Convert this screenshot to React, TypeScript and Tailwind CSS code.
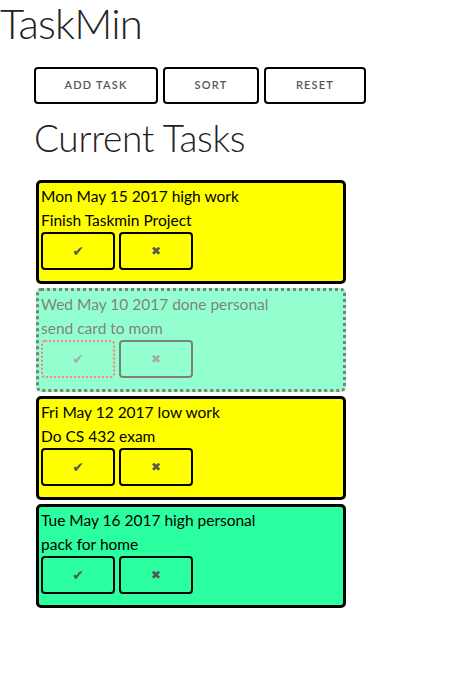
import React from "react";

type Task = { date: string; body: string; bg: string; done?: boolean };

const tasks: Task[] = [
  { date: "Mon May 15 2017 high work", body: "Finish Taskmin Project", bg: "bg-[#ffff00]" },
  { date: "Wed May 10 2017 done personal", body: "send card to mom", bg: "bg-[#2bff9f]", done: true },
  { date: "Fri May 12 2017 low work", body: "Do CS 432 exam", bg: "bg-[#ffff00]" },
  { date: "Tue May 16 2017 high personal", body: "pack for home", bg: "bg-[#2bff9f]" },
];

function Card({ t }: { t: Task }) {
  return (
    <div
      className={`${t.bg} ${t.done ? "opacity-50 border-dotted" : "border-solid"} border-[3px] border-black rounded-[5px] w-[310px] h-[104px] pl-[2px] pt-[1px] text-black text-[15.5px]`}
    >
      <div className="h-[24px] leading-[24px]">{t.date}</div>
      <div className="h-[24px] leading-[24px]">{t.body}</div>
      <div className="flex gap-[4px]">
        <button
          className={`w-[74px] h-[38px] rounded-[4px] border-2 ${t.done ? "border-dotted border-[#ff0000]" : "border-solid border-black"} flex items-center justify-center text-[14px] text-[#555]`}
          style={{ fontFamily: "'DejaVu Sans', sans-serif" }}
        >
          ✔
        </button>
        <button
          className="w-[74px] h-[38px] rounded-[4px] border-2 border-solid border-black flex items-center justify-center text-[12px] text-[#555]"
          style={{ fontFamily: "'DejaVu Sans', sans-serif" }}
        >
          ✖
        </button>
      </div>
    </div>
  );
}

export default function App() {
  return (
    <div className="bg-white min-h-[697px] text-[#222]" style={{ fontFamily: "Lato, 'Noto Sans', sans-serif" }}>
      <h1 className="text-[42px] font-light leading-[46px] h-[46px] tracking-[-0.8px] m-0">TaskMin</h1>
      <div className="pl-[34px]">
        <div className="flex gap-[5px] mt-[21px]">
          {["ADD TASK", "SORT", "RESET"].map((l, i) => (
            <button
              key={l}
              className={`${i === 0 ? "w-[124px]" : i === 1 ? "w-[96px]" : "w-[102px]"} h-[37px] border-2 border-black rounded-[4px] text-[11px] font-semibold tracking-[1.2px] text-[#555]`}
            >
              {l}
            </button>
          ))}
        </div>
        <h2 className="text-[37px] font-light leading-[40px] mt-[14px] h-[40px] tracking-[-0.3px]">Current Tasks</h2>
        <div className="flex flex-col gap-[4px] mt-[22px] pl-[2px]">
          {tasks.map((t) => (
            <Card key={t.date} t={t} />
          ))}
        </div>
      </div>
    </div>
  );
}
